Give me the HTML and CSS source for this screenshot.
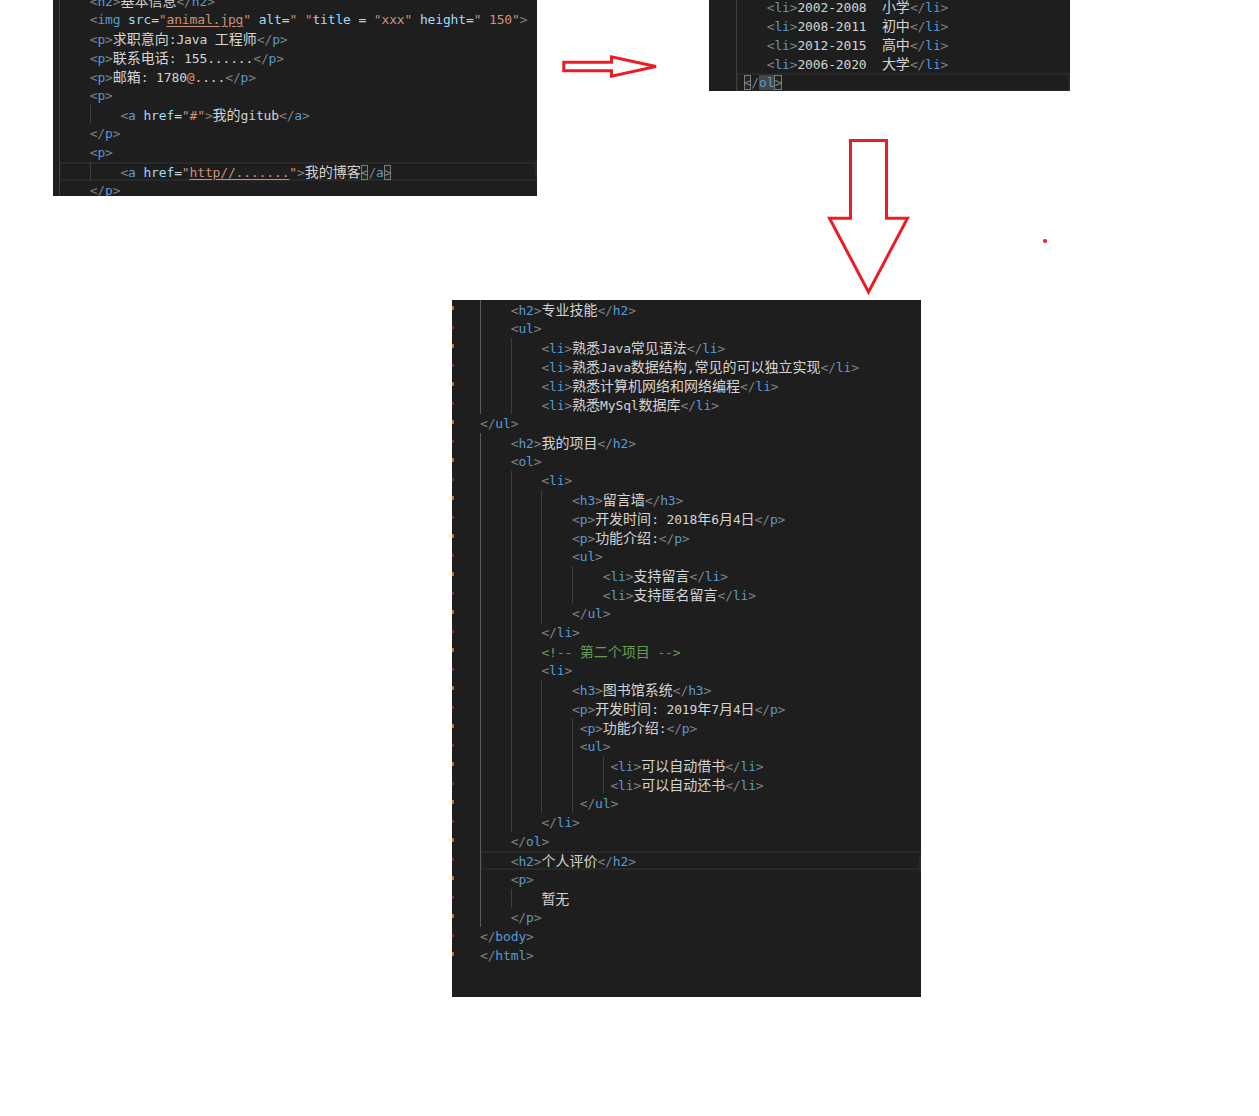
FILE: index.html
```html
<!DOCTYPE html>
<html lang="zh-CN">
<head>
    <meta charset="UTF-8">
    <title>简历代码截图</title>
    <link rel="stylesheet" href="styles.css">
</head>
<body>
    <div class="top">
        <!-- 第一张：基本信息 -->
        <div class="shot shot-a">
            <div class="code">
<div class="ln"><span class="g"></span><span class="t">&lt;<b>h2</b>&gt;</span><i>基本信息</i><span class="t">&lt;/<b>h2</b>&gt;</span></div>
<div class="ln"><span class="g"></span><span class="t">&lt;<b>img</b></span> <span class="a">src</span>=<span class="s">"<u>animal.jpg</u>"</span> <span class="a">alt</span>=<span class="s">" "</span><span class="a">title</span> = <span class="s">"xxx"</span> <span class="a">height</span>=<span class="s">" 150"</span><span class="t">&gt;</span></div>
<div class="ln"><span class="g"></span><span class="t">&lt;<b>p</b>&gt;</span><i>求职意向</i>:Java <i>工程师</i><span class="t">&lt;/<b>p</b>&gt;</span></div>
<div class="ln"><span class="g"></span><span class="t">&lt;<b>p</b>&gt;</span><i>联系电话</i>: 155......<span class="t">&lt;/<b>p</b>&gt;</span></div>
<div class="ln"><span class="g"></span><span class="t">&lt;<b>p</b>&gt;</span><i>邮箱</i>: 1780<span class="s">@</span>....<span class="t">&lt;/<b>p</b>&gt;</span></div>
<div class="ln"><span class="g"></span><span class="t">&lt;<b>p</b>&gt;</span></div>
<div class="ln"><span class="g"></span><span class="g"></span><span class="t">&lt;<b>a</b></span> <span class="a">href</span>=<span class="s">"#"</span><span class="t">&gt;</span><i>我的</i>gitub<span class="t">&lt;/<b>a</b>&gt;</span></div>
<div class="ln"><span class="g"></span><span class="t">&lt;/<b>p</b>&gt;</span></div>
<div class="ln"><span class="g"></span><span class="t">&lt;<b>p</b>&gt;</span></div>
<div class="ln cur"><span class="g"></span><span class="g"></span><span class="t">&lt;<b>a</b></span> <span class="a">href</span>=<span class="s">"<u>http//.......</u>"</span><span class="t">&gt;</span><i>我的博客</i><span class="t"><span class="bm">&lt;</span>/<b>a</b><span class="bm">&gt;</span></span></div>
<div class="ln"><span class="g"></span><span class="t">&lt;/<b>p</b>&gt;</span></div>
            </div>
        </div>

        <svg class="arrow-r" width="102" height="28" viewBox="0 0 102 28">
            <polygon points="3.8,9.2 51.5,9.2 51.5,3.8 96,13.5 51.5,23.2 51.5,17.8 3.8,17.8" fill="none" stroke="#ed1c24" stroke-width="3"/>
        </svg>

        <div class="side">
            <!-- 第二张：教育经历 -->
            <div class="shot shot-b">
                <div class="code">
<div class="ln"><span class="g"></span><span class="t">&lt;<b>li</b>&gt;</span>2002-2008  <i>小学</i><span class="t">&lt;/<b>li</b>&gt;</span></div>
<div class="ln"><span class="g"></span><span class="t">&lt;<b>li</b>&gt;</span>2008-2011  <i>初中</i><span class="t">&lt;/<b>li</b>&gt;</span></div>
<div class="ln"><span class="g"></span><span class="t">&lt;<b>li</b>&gt;</span>2012-2015  <i>高中</i><span class="t">&lt;/<b>li</b>&gt;</span></div>
<div class="ln"><span class="g"></span><span class="t">&lt;<b>li</b>&gt;</span>2006-2020  <i>大学</i><span class="t">&lt;/<b>li</b>&gt;</span></div>
<div class="ln cur"><span class="g g1"></span><span class="t"><span class="bm">&lt;</span>/<b class="sel">ol</b><span class="bm">&gt;</span></span></div>
                </div>
            </div>

            <svg class="arrow-d" width="85" height="160" viewBox="0 0 85 160">
                <polygon points="24.5,3.5 60.5,3.5 60.5,81.2 81.5,81.2 42.5,155 3.5,81.2 24.5,81.2" fill="none" stroke="#ed1c24" stroke-width="3"/>
            </svg>
            <span class="dot"></span>
        </div>
    </div>

    <!-- 第三张：技能、项目、评价 -->
    <div class="shot shot-c">
        <div class="gutter"></div>
        <div class="code">
<div class="ln"><span class="g ga"></span><span class="t">&lt;<b>h2</b>&gt;</span><i>专业技能</i><span class="t">&lt;/<b>h2</b>&gt;</span></div>
<div class="ln"><span class="g ga"></span><span class="t">&lt;<b>ul</b>&gt;</span></div>
<div class="ln"><span class="g ga"></span><span class="g"></span><span class="t">&lt;<b>li</b>&gt;</span><i>熟悉</i>Java<i>常见语法</i><span class="t">&lt;/<b>li</b>&gt;</span></div>
<div class="ln"><span class="g ga"></span><span class="g"></span><span class="t">&lt;<b>li</b>&gt;</span><i>熟悉</i>Java<i>数据结构</i>,<i>常见的可以独立实现</i><span class="t">&lt;/<b>li</b>&gt;</span></div>
<div class="ln"><span class="g ga"></span><span class="g"></span><span class="t">&lt;<b>li</b>&gt;</span><i>熟悉计算机网络和网络编程</i><span class="t">&lt;/<b>li</b>&gt;</span></div>
<div class="ln"><span class="g ga"></span><span class="g"></span><span class="t">&lt;<b>li</b>&gt;</span><i>熟悉</i>MySql<i>数据库</i><span class="t">&lt;/<b>li</b>&gt;</span></div>
<div class="ln"><span class="t">&lt;/<b>ul</b>&gt;</span></div>
<div class="ln"><span class="g ga"></span><span class="t">&lt;<b>h2</b>&gt;</span><i>我的项目</i><span class="t">&lt;/<b>h2</b>&gt;</span></div>
<div class="ln"><span class="g ga"></span><span class="t">&lt;<b>ol</b>&gt;</span></div>
<div class="ln"><span class="g ga"></span><span class="g"></span><span class="t">&lt;<b>li</b>&gt;</span></div>
<div class="ln"><span class="g ga"></span><span class="g"></span><span class="g"></span><span class="t">&lt;<b>h3</b>&gt;</span><i>留言墙</i><span class="t">&lt;/<b>h3</b>&gt;</span></div>
<div class="ln"><span class="g ga"></span><span class="g"></span><span class="g"></span><span class="t">&lt;<b>p</b>&gt;</span><i>开发时间</i>: 2018<i>年</i>6<i>月</i>4<i>日</i><span class="t">&lt;/<b>p</b>&gt;</span></div>
<div class="ln"><span class="g ga"></span><span class="g"></span><span class="g"></span><span class="t">&lt;<b>p</b>&gt;</span><i>功能介绍</i>:<span class="t">&lt;/<b>p</b>&gt;</span></div>
<div class="ln"><span class="g ga"></span><span class="g"></span><span class="g"></span><span class="t">&lt;<b>ul</b>&gt;</span></div>
<div class="ln"><span class="g ga"></span><span class="g"></span><span class="g"></span><span class="g"></span><span class="t">&lt;<b>li</b>&gt;</span><i>支持留言</i><span class="t">&lt;/<b>li</b>&gt;</span></div>
<div class="ln"><span class="g ga"></span><span class="g"></span><span class="g"></span><span class="g"></span><span class="t">&lt;<b>li</b>&gt;</span><i>支持匿名留言</i><span class="t">&lt;/<b>li</b>&gt;</span></div>
<div class="ln"><span class="g ga"></span><span class="g"></span><span class="g"></span><span class="t">&lt;/<b>ul</b>&gt;</span></div>
<div class="ln"><span class="g ga"></span><span class="g"></span><span class="t">&lt;/<b>li</b>&gt;</span></div>
<div class="ln"><span class="g ga"></span><span class="g"></span><span class="c">&lt;!-- <i>第二个项目</i> --&gt;</span></div>
<div class="ln"><span class="g ga"></span><span class="g"></span><span class="t">&lt;<b>li</b>&gt;</span></div>
<div class="ln"><span class="g ga"></span><span class="g"></span><span class="g"></span><span class="t">&lt;<b>h3</b>&gt;</span><i>图书馆系统</i><span class="t">&lt;/<b>h3</b>&gt;</span></div>
<div class="ln"><span class="g ga"></span><span class="g"></span><span class="g"></span><span class="t">&lt;<b>p</b>&gt;</span><i>开发时间</i>: 2019<i>年</i>7<i>月</i>4<i>日</i><span class="t">&lt;/<b>p</b>&gt;</span></div>
<div class="ln"><span class="g ga"></span><span class="g"></span><span class="g"></span><span class="g g1"></span><span class="t">&lt;<b>p</b>&gt;</span><i>功能介绍</i>:<span class="t">&lt;/<b>p</b>&gt;</span></div>
<div class="ln"><span class="g ga"></span><span class="g"></span><span class="g"></span><span class="g g1"></span><span class="t">&lt;<b>ul</b>&gt;</span></div>
<div class="ln"><span class="g ga"></span><span class="g"></span><span class="g"></span><span class="g"></span><span class="g g1"></span><span class="t">&lt;<b>li</b>&gt;</span><i>可以自动借书</i><span class="t">&lt;/<b>li</b>&gt;</span></div>
<div class="ln"><span class="g ga"></span><span class="g"></span><span class="g"></span><span class="g"></span><span class="g g1"></span><span class="t">&lt;<b>li</b>&gt;</span><i>可以自动还书</i><span class="t">&lt;/<b>li</b>&gt;</span></div>
<div class="ln"><span class="g ga"></span><span class="g"></span><span class="g"></span><span class="g g1"></span><span class="t">&lt;/<b>ul</b>&gt;</span></div>
<div class="ln"><span class="g ga"></span><span class="g"></span><span class="t">&lt;/<b>li</b>&gt;</span></div>
<div class="ln"><span class="g ga"></span><span class="t">&lt;/<b>ol</b>&gt;</span></div>
<div class="ln cur"><span class="g ga"></span><span class="t">&lt;<b>h2</b>&gt;</span><i>个人评价</i><span class="t">&lt;/<b>h2</b>&gt;</span></div>
<div class="ln"><span class="g ga"></span><span class="t">&lt;<b>p</b>&gt;</span></div>
<div class="ln"><span class="g ga"></span><span class="g"></span><i>暂无</i></div>
<div class="ln"><span class="g ga"></span><span class="t">&lt;/<b>p</b>&gt;</span></div>
<div class="ln"><span class="t">&lt;/<b>body</b>&gt;</span></div>
<div class="ln"><span class="t">&lt;/<b>html</b>&gt;</span></div>
        </div>
    </div>
</body>
</html>
```

FILE: styles.css
```css
body {
    margin: 0;
    background: #fff;
}
.top {
    display: flex;
    align-items: flex-start;
}

/* 编辑器截图 */
.shot {
    background: #1e1e1e;
    overflow: hidden;
    font-family: "DejaVu Sans Mono", "Noto Sans CJK SC", monospace;
    font-size: 13px;
    letter-spacing: -0.15px;
    color: #d4d4d4;
}
.shot-a {
    margin-left: 53px;
    width: 484px;
    height: 196px;
    flex: none;
}
.shot-a .code {
    margin-top: -9px;
    padding-left: 6px;
}
.shot-b {
    height: 91px;
}
.shot-b .code {
    margin-top: -3px;
    padding-left: 27px;
}
.shot-c {
    display: flex;
    margin: 3px 0 0 452px;
    width: 469px;
    height: 697px;
}
.gutter {
    width: 28px;
    flex: none;
    background: repeating-linear-gradient(to bottom,
        transparent 0 6px, #c9671c 6px 10px, transparent 10px 26px,
        #8c2a1e 26px 29px, transparent 29px 38px) no-repeat left top / 2px 665px;
}
.code {
    flex: 1;
}
.ln {
    height: 19px;
    line-height: 19px;
    white-space: pre;
}
.ln.cur {
    box-shadow: inset 0 0 0 2px #282828;
}

/* 缩进参考线 */
.g {
    display: inline-block;
    width: 30.7px;
    height: 19px;
    vertical-align: top;
    border-left: 1px solid #404040;
    box-sizing: border-box;
}
.g1 {
    width: 7.67px;
}
.ga {
    border-left-color: #5a5a5a;
}

/* 语法颜色 */
.t {
    color: #808080;
}
.t b {
    color: #569cd6;
    font-weight: normal;
}
.a {
    color: #9cdcfe;
}
.s {
    color: #ce9178;
}
.s u {
    text-underline-offset: 2px;
}
.c {
    color: #6a9955;
}
.shot i {
    font-style: normal;
    font-family: "Noto Sans CJK SC", sans-serif;
    font-size: 14px;
    letter-spacing: 0;
}
.bm {
    background: #1b2a1d;
    box-shadow: inset 0 0 0 1px #7a7a7a;
}
.sel {
    background: #474747;
}

/* 箭头 */
.arrow-r {
    flex: none;
    margin: 53px 0 0 23px;
}
.side {
    position: relative;
    flex: none;
    width: 361px;
    margin-left: 47px;
}
.arrow-d {
    display: block;
    margin: 46px 0 0 117px;
}
.dot {
    position: absolute;
    left: 334px;
    top: 239px;
    width: 4px;
    height: 4px;
    border-radius: 2px;
    background: #ed1c24;
}
```
